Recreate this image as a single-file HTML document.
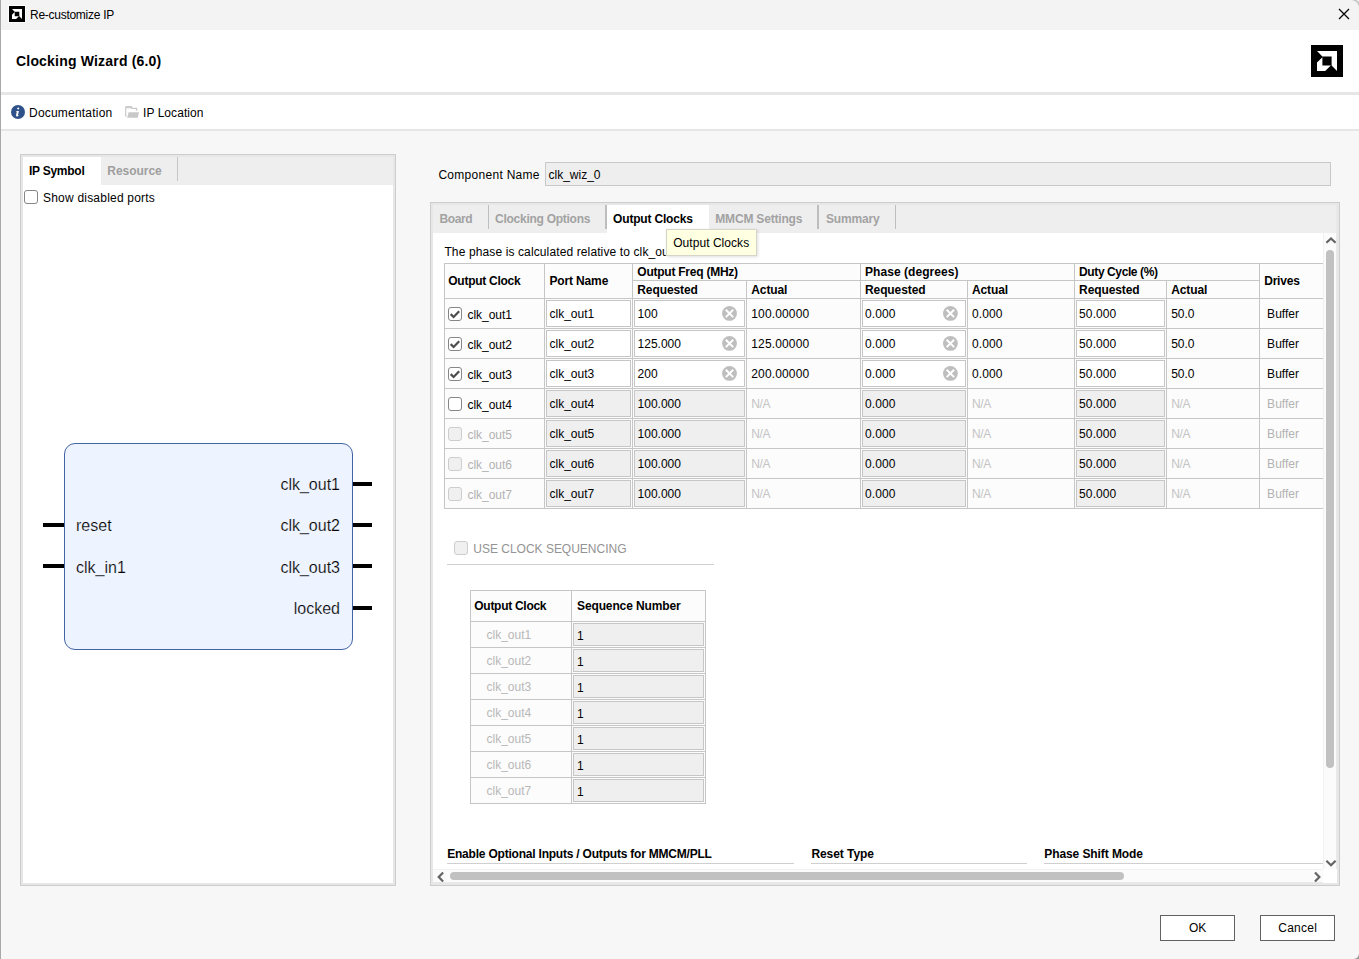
<!DOCTYPE html>
<html><head><meta charset="utf-8"><title>Re-customize IP</title>
<style>
*{box-sizing:border-box;margin:0;padding:0}
html,body{width:1359px;height:959px;overflow:hidden}
body{background:#f7f7f7;font-family:"Liberation Sans",sans-serif;font-size:12px;color:#000;position:relative}
.abs{position:absolute}
.t{position:absolute;white-space:pre}
.cb{position:absolute;width:14px;height:14px;border:1px solid #868686;border-radius:3px;background:#fff}
.cb.dis{border-color:#cdcdcd;background:#f0f0f0}
.inp{position:absolute;border:1px solid #c6c6c6;background:#fff}
.inp.dis{background:#efefef}
</style></head><body>
<div class="abs" style="left:0;top:0;width:1359px;height:30px;background:#f3f3f3"></div>
<div class="abs" style="left:0;top:30px;width:1359px;height:62px;background:#fff"></div>
<div class="abs" style="left:0;top:92px;width:1359px;height:3px;background:#e6e6e6"></div>
<div class="abs" style="left:0;top:95px;width:1359px;height:34px;background:#fff"></div>
<div class="abs" style="left:0;top:129px;width:1359px;height:2px;background:#e6e6e6"></div>
<div class="abs" style="left:0;top:0;width:1px;height:959px;background:#a8a8a8"></div>
<div class="abs" style="left:8px;top:5px;width:18px;height:18px;background:#fff"></div>
<svg class="abs" style="left:9px;top:6px" width="16" height="16" viewBox="0 0 32 32"><rect width="32" height="32" fill="#000"/><path d="M6 6H26V26L20.6 20.6V11.4H11.4Z" fill="#fff"/><path d="M11.4 12.2V20.6H19.8L14.2 26H6V17.6Z" fill="#fff"/></svg>
<svg class="abs" style="left:1311px;top:45px" width="32" height="32" viewBox="0 0 32 32"><rect width="32" height="32" fill="#000"/><path d="M6 6H26V26L20.6 20.6V11.4H11.4Z" fill="#fff"/><path d="M11.4 12.2V20.6H19.8L14.2 26H6V17.6Z" fill="#fff"/></svg>
<span class="t" style="top:8px;font-size:12px;line-height:14px;letter-spacing:-0.27px;left:30px;">Re-customize IP</span>
<svg class="abs" style="left:1338px;top:8px" width="12" height="12" viewBox="0 0 12 12"><path d="M1 1L11 11M11 1L1 11" stroke="#000" stroke-width="1.200" fill="none"/></svg>
<span class="t" style="top:53px;font-size:14px;line-height:16px;letter-spacing:0.19px;left:16px;font-weight:bold;">Clocking Wizard (6.0)</span>
<svg class="abs" style="left:1347px;top:0" width="12" height="12" viewBox="0 0 12 12"><path d="M4 -1Q12 0 13 8" fill="none" stroke="#c4c4c4" stroke-width="1.600"/></svg>
<svg class="abs" style="left:1349px;top:949px" width="10" height="10" viewBox="0 0 10 10"><path d="M10 4.500Q9.500 9.500 4.500 10L10 10Z" fill="#9a9a9a"/></svg>
<svg class="abs" style="left:11px;top:105px" width="14" height="14" viewBox="0 0 14 14"><circle cx="7" cy="7" r="7" fill="#2f5189"/><path d="M7.2 2.6a1 1 0 1 1 0 2a1 1 0 0 1 0-2ZM5.2 6h2.7l-.9 3.9c-.1.5.2.6.7.4l.1.4c-.7.5-1.3.7-1.9.7c-.8 0-1-.5-.8-1.300l.6-3.100c.1-.5-.1-.6-.6-.6Z" fill="#fff"/></svg>
<span class="t" style="top:106px;font-size:12px;line-height:14px;letter-spacing:0.21px;left:29px;">Documentation</span>
<svg class="abs" style="left:125px;top:105px" width="15" height="14" viewBox="0 0 15 14"><path d="M0.700 11.800V2.400Q0.700 1.700 1.400 1.700H6.100Q6.700 1.700 6.700 2.400V3.300H11.600V5.800" fill="none" stroke="#c9c9c9" stroke-width="1.200"/><path d="M0.700 1.400H6.500V3.300H0.700Z" fill="#cdcdcd"/><path d="M3.600 7.300H14L12.800 12.800H2.100Z" fill="#c9c9c9"/></svg>
<span class="t" style="top:106px;font-size:12px;line-height:14px;letter-spacing:0.06px;left:143px;">IP Location</span>
<div class="abs" style="left:20px;top:154px;width:376px;height:732px;background:#e7e7e7;border:1px solid #cdcdcd"></div>
<div class="abs" style="left:23px;top:157px;width:370px;height:726px;background:#fff"></div>
<div class="abs" style="left:101px;top:157px;width:292px;height:28px;background:#eeeeee"></div>
<div class="abs" style="left:177px;top:157px;width:1px;height:24px;background:#c6c6c6"></div>
<span class="t" style="top:164px;font-size:12px;line-height:14px;letter-spacing:-0.26px;left:29px;font-weight:bold;">IP Symbol</span>
<span class="t" style="top:164px;font-size:12px;line-height:14px;letter-spacing:-0.04px;left:107.3px;font-weight:bold;color:#9e9e9e;">Resource</span>
<div class="cb" style="left:24px;top:190px"></div>
<span class="t" style="top:191px;font-size:12px;line-height:14px;letter-spacing:0.21px;left:43px;">Show disabled ports</span>
<div class="abs" style="left:64px;top:443px;width:289px;height:207px;background:#eef4ff;border:1px solid #4364a4;border-radius:11px"></div>
<div class="abs" style="left:43px;top:523px;width:21px;height:4px;background:#000"></div>
<div class="abs" style="left:43px;top:564px;width:21px;height:4px;background:#000"></div>
<div class="abs" style="left:353px;top:482px;width:19px;height:4px;background:#000"></div>
<div class="abs" style="left:353px;top:523px;width:19px;height:4px;background:#000"></div>
<div class="abs" style="left:353px;top:564px;width:19px;height:4px;background:#000"></div>
<div class="abs" style="left:353px;top:606px;width:19px;height:4px;background:#000"></div>
<span class="t" style="top:517px;font-size:16px;line-height:17px;left:76px;-webkit-text-stroke:0.2px #eef4ff;">reset</span>
<span class="t" style="top:559px;font-size:16px;line-height:17px;left:76px;-webkit-text-stroke:0.2px #eef4ff;">clk_in1</span>
<span class="t" style="top:476px;font-size:16px;line-height:17px;left:280.41px;-webkit-text-stroke:0.2px #eef4ff;">clk_out1</span>
<span class="t" style="top:517px;font-size:16px;line-height:17px;left:280.41px;-webkit-text-stroke:0.2px #eef4ff;">clk_out2</span>
<span class="t" style="top:559px;font-size:16px;line-height:17px;left:280.41px;-webkit-text-stroke:0.2px #eef4ff;">clk_out3</span>
<span class="t" style="top:600px;font-size:16px;line-height:17px;left:293.75px;-webkit-text-stroke:0.2px #eef4ff;">locked</span>
<span class="t" style="top:168px;font-size:12px;line-height:14px;letter-spacing:0.29px;left:438.4px;">Component Name</span>
<div class="abs" style="left:545px;top:162px;width:786px;height:24px;background:#eeeeee;border:1px solid #c8c8c8"></div>
<span class="t" style="top:168px;font-size:12px;line-height:14px;letter-spacing:-0px;left:548.5px;">clk_wiz_0</span>
<div class="abs" style="left:430px;top:202px;width:910px;height:684px;background:#e7e7e7;border:1px solid #cdcdcd"></div>
<div class="abs" style="left:433px;top:205px;width:904px;height:678px;background:#fff"></div>
<div class="abs" style="left:433px;top:205px;width:904px;height:28px;background:#eeeeee"></div>
<div class="abs" style="left:607px;top:205px;width:102px;height:28px;background:#fff"></div>
<div class="abs" style="left:488px;top:205px;width:1px;height:24px;background:#bebebe"></div>
<div class="abs" style="left:605px;top:205px;width:2px;height:24px;background:#bebebe"></div>
<div class="abs" style="left:817px;top:205px;width:2px;height:24px;background:#bebebe"></div>
<div class="abs" style="left:895px;top:205px;width:1px;height:24px;background:#bebebe"></div>
<span class="t" style="top:212px;font-size:12px;line-height:14px;letter-spacing:-0.39px;left:439.5px;font-weight:bold;color:#a2a2a2;">Board</span>
<span class="t" style="top:212px;font-size:12px;line-height:14px;letter-spacing:-0.27px;left:495.1px;font-weight:bold;color:#a2a2a2;">Clocking Options</span>
<span class="t" style="top:212px;font-size:12px;line-height:14px;letter-spacing:-0.19px;left:613.1px;font-weight:bold;">Output Clocks</span>
<span class="t" style="top:212px;font-size:12px;line-height:14px;letter-spacing:-0.19px;left:715.3px;font-weight:bold;color:#a2a2a2;">MMCM Settings</span>
<span class="t" style="top:212px;font-size:12px;line-height:14px;letter-spacing:-0.16px;left:826px;font-weight:bold;color:#a2a2a2;">Summary</span>
<div class="abs" style="left:1323px;top:233px;width:14px;height:637px;background:#fbfbfb;border-left:1px solid #f1f1f1"></div>
<div class="abs" style="left:433px;top:869px;width:890px;height:14px;background:#fbfbfb;border-top:1px solid #f1f1f1"></div>
<div class="abs" style="left:1326px;top:250px;width:8px;height:518px;background:#c1c1c1;border-radius:4px"></div>
<div class="abs" style="left:450px;top:872px;width:674px;height:8px;background:#c1c1c1;border-radius:4px"></div>
<div class="abs" style="left:1336px;top:205px;width:1px;height:664px;background:#e9e9e9"></div>
<div class="abs" style="left:433px;top:882px;width:890px;height:1px;background:#e9e9e9"></div>
<svg class="abs" style="left:1323px;top:232px" width="17" height="17" viewBox="0 0 17 17"><polyline transform="translate(8.00 8.60)" points="-4.600,2.200 0,-2.200 4.600,2.200" fill="none" stroke="#646464" stroke-width="2.200"/></svg>
<svg class="abs" style="left:1323px;top:855px" width="17" height="17" viewBox="0 0 17 17"><polyline transform="translate(8.00 8.00)" points="-4.600,-2.200 0,2.200 4.600,-2.200" fill="none" stroke="#646464" stroke-width="2.200"/></svg>
<svg class="abs" style="left:432px;top:869px" width="17" height="17" viewBox="0 0 17 17"><polyline transform="translate(8.90 8.00)" points="2.200,-4.600 -2.200,0 2.200,4.600" fill="none" stroke="#646464" stroke-width="2.200"/></svg>
<svg class="abs" style="left:1309px;top:869px" width="17" height="17" viewBox="0 0 17 17"><polyline transform="translate(8.20 8.00)" points="-2.200,-4.600 2.200,0 -2.200,4.600" fill="none" stroke="#646464" stroke-width="2.200"/></svg>
<span class="t" style="top:245px;font-size:12px;line-height:14px;letter-spacing:0.12px;left:444.4px;">The phase is calculated relative to clk_out1.</span>
<div class="abs" style="left:444px;top:263px;width:879px;height:246px;background:#fcfcfc"></div>
<div class="abs" style="left:444px;top:263px;width:879px;height:1px;background:#c6c6c6"></div>
<div class="abs" style="left:632px;top:280px;width:627px;height:1px;background:#c6c6c6"></div>
<div class="abs" style="left:444px;top:298px;width:879px;height:1px;background:#c6c6c6"></div>
<div class="abs" style="left:444px;top:328px;width:879px;height:1px;background:#c6c6c6"></div>
<div class="abs" style="left:444px;top:358px;width:879px;height:1px;background:#c6c6c6"></div>
<div class="abs" style="left:444px;top:388px;width:879px;height:1px;background:#c6c6c6"></div>
<div class="abs" style="left:444px;top:418px;width:879px;height:1px;background:#c6c6c6"></div>
<div class="abs" style="left:444px;top:448px;width:879px;height:1px;background:#c6c6c6"></div>
<div class="abs" style="left:444px;top:478px;width:879px;height:1px;background:#c6c6c6"></div>
<div class="abs" style="left:444px;top:508px;width:879px;height:1px;background:#c6c6c6"></div>
<div class="abs" style="left:444px;top:263px;width:1px;height:246px;background:#c6c6c6"></div>
<div class="abs" style="left:544px;top:263px;width:1px;height:246px;background:#c6c6c6"></div>
<div class="abs" style="left:632px;top:263px;width:1px;height:246px;background:#c6c6c6"></div>
<div class="abs" style="left:746px;top:280px;width:1px;height:229px;background:#c6c6c6"></div>
<div class="abs" style="left:860px;top:263px;width:1px;height:246px;background:#c6c6c6"></div>
<div class="abs" style="left:967px;top:280px;width:1px;height:229px;background:#c6c6c6"></div>
<div class="abs" style="left:1074px;top:263px;width:1px;height:246px;background:#c6c6c6"></div>
<div class="abs" style="left:1166px;top:280px;width:1px;height:229px;background:#c6c6c6"></div>
<div class="abs" style="left:1259px;top:263px;width:1px;height:246px;background:#c6c6c6"></div>
<span class="t" style="top:274px;font-size:12px;line-height:14px;letter-spacing:-0.27px;left:448.3px;font-weight:bold;">Output Clock</span>
<span class="t" style="top:274px;font-size:12px;line-height:14px;letter-spacing:-0.15px;left:549.5px;font-weight:bold;">Port Name</span>
<span class="t" style="top:265px;font-size:12px;line-height:14px;letter-spacing:-0.24px;left:637.3px;font-weight:bold;">Output Freq (MHz)</span>
<span class="t" style="top:283px;font-size:12px;line-height:14px;letter-spacing:-0.1px;left:637.3px;font-weight:bold;">Requested</span>
<span class="t" style="top:283px;font-size:12px;line-height:14px;letter-spacing:-0.11px;left:751.3px;font-weight:bold;">Actual</span>
<span class="t" style="top:265px;font-size:12px;line-height:14px;letter-spacing:0.05px;left:865px;font-weight:bold;">Phase (degrees)</span>
<span class="t" style="top:283px;font-size:12px;line-height:14px;letter-spacing:-0.1px;left:865px;font-weight:bold;">Requested</span>
<span class="t" style="top:283px;font-size:12px;line-height:14px;letter-spacing:-0.11px;left:972px;font-weight:bold;">Actual</span>
<span class="t" style="top:265px;font-size:12px;line-height:14px;letter-spacing:-0.4px;left:1079.1px;font-weight:bold;">Duty Cycle (%)</span>
<span class="t" style="top:283px;font-size:12px;line-height:14px;letter-spacing:-0.1px;left:1079.1px;font-weight:bold;">Requested</span>
<span class="t" style="top:283px;font-size:12px;line-height:14px;letter-spacing:-0.11px;left:1171.2px;font-weight:bold;">Actual</span>
<span class="t" style="top:274px;font-size:12px;line-height:14px;letter-spacing:-0.2px;left:1264.2px;font-weight:bold;">Drives</span>
<div class="cb" style="left:448px;top:307px"></div>
<svg class="abs" style="left:448px;top:307px" width="14" height="14" viewBox="0 0 14 14"><path d="M2.700 7.100L5.600 10L11.200 4.200" fill="none" stroke="#4d4d4d" stroke-width="2.200"/></svg>
<span class="t" style="top:308px;font-size:12px;line-height:14px;letter-spacing:-0.01px;left:467.4px;">clk_out1</span>
<div class="inp" style="left:546px;top:300px;width:85px;height:27px"></div>
<div class="inp" style="left:634px;top:300px;width:111px;height:27px"></div>
<div class="inp" style="left:862px;top:300px;width:104px;height:27px"></div>
<div class="inp" style="left:1076px;top:300px;width:89px;height:27px"></div>
<span class="t" style="top:307px;font-size:12px;line-height:14px;letter-spacing:-0.01px;left:549.5px;">clk_out1</span>
<span class="t" style="top:307px;font-size:12px;line-height:14px;left:637.6px;">100</span>
<span class="t" style="top:307px;font-size:12px;line-height:14px;letter-spacing:0.09px;left:865px;">0.000</span>
<span class="t" style="top:307px;font-size:12px;line-height:14px;letter-spacing:0.1px;left:1079.1px;">50.000</span>
<svg class="abs" style="left:721px;top:305px" width="17" height="17" viewBox="0 0 17 17"><g transform="translate(8.50 8.40)"><circle r="7.400" fill="#bebebe"/><path d="M-3.700 -3.700L3.700 3.700M3.700 -3.700L-3.700 3.700" stroke="#fff" stroke-width="2" fill="none"/></g></svg>
<svg class="abs" style="left:942px;top:305px" width="17" height="17" viewBox="0 0 17 17"><g transform="translate(8.40 8.40)"><circle r="7.400" fill="#bebebe"/><path d="M-3.700 -3.700L3.700 3.700M3.700 -3.700L-3.700 3.700" stroke="#fff" stroke-width="2" fill="none"/></g></svg>
<span class="t" style="top:307px;font-size:12px;line-height:14px;letter-spacing:0.14px;left:751.3px;">100.00000</span>
<span class="t" style="top:307px;font-size:12px;line-height:14px;letter-spacing:0.09px;left:972px;">0.000</span>
<span class="t" style="top:307px;font-size:12px;line-height:14px;letter-spacing:-0.04px;left:1171.2px;">50.0</span>
<span class="t" style="top:307px;font-size:12px;line-height:14px;letter-spacing:0.03px;left:1267.1px;">Buffer</span>
<div class="cb" style="left:448px;top:337px"></div>
<svg class="abs" style="left:448px;top:337px" width="14" height="14" viewBox="0 0 14 14"><path d="M2.700 7.100L5.600 10L11.200 4.200" fill="none" stroke="#4d4d4d" stroke-width="2.200"/></svg>
<span class="t" style="top:338px;font-size:12px;line-height:14px;letter-spacing:-0.01px;left:467.4px;">clk_out2</span>
<div class="inp" style="left:546px;top:330px;width:85px;height:27px"></div>
<div class="inp" style="left:634px;top:330px;width:111px;height:27px"></div>
<div class="inp" style="left:862px;top:330px;width:104px;height:27px"></div>
<div class="inp" style="left:1076px;top:330px;width:89px;height:27px"></div>
<span class="t" style="top:337px;font-size:12px;line-height:14px;letter-spacing:-0.01px;left:549.5px;">clk_out2</span>
<span class="t" style="top:337px;font-size:12px;line-height:14px;left:637.6px;">125.000</span>
<span class="t" style="top:337px;font-size:12px;line-height:14px;letter-spacing:0.09px;left:865px;">0.000</span>
<span class="t" style="top:337px;font-size:12px;line-height:14px;letter-spacing:0.1px;left:1079.1px;">50.000</span>
<svg class="abs" style="left:721px;top:335px" width="17" height="17" viewBox="0 0 17 17"><g transform="translate(8.50 8.40)"><circle r="7.400" fill="#bebebe"/><path d="M-3.700 -3.700L3.700 3.700M3.700 -3.700L-3.700 3.700" stroke="#fff" stroke-width="2" fill="none"/></g></svg>
<svg class="abs" style="left:942px;top:335px" width="17" height="17" viewBox="0 0 17 17"><g transform="translate(8.40 8.40)"><circle r="7.400" fill="#bebebe"/><path d="M-3.700 -3.700L3.700 3.700M3.700 -3.700L-3.700 3.700" stroke="#fff" stroke-width="2" fill="none"/></g></svg>
<span class="t" style="top:337px;font-size:12px;line-height:14px;letter-spacing:0.14px;left:751.3px;">125.00000</span>
<span class="t" style="top:337px;font-size:12px;line-height:14px;letter-spacing:0.09px;left:972px;">0.000</span>
<span class="t" style="top:337px;font-size:12px;line-height:14px;letter-spacing:-0.04px;left:1171.2px;">50.0</span>
<span class="t" style="top:337px;font-size:12px;line-height:14px;letter-spacing:0.03px;left:1267.1px;">Buffer</span>
<div class="cb" style="left:448px;top:367px"></div>
<svg class="abs" style="left:448px;top:367px" width="14" height="14" viewBox="0 0 14 14"><path d="M2.700 7.100L5.600 10L11.200 4.200" fill="none" stroke="#4d4d4d" stroke-width="2.200"/></svg>
<span class="t" style="top:368px;font-size:12px;line-height:14px;letter-spacing:-0.01px;left:467.4px;">clk_out3</span>
<div class="inp" style="left:546px;top:360px;width:85px;height:27px"></div>
<div class="inp" style="left:634px;top:360px;width:111px;height:27px"></div>
<div class="inp" style="left:862px;top:360px;width:104px;height:27px"></div>
<div class="inp" style="left:1076px;top:360px;width:89px;height:27px"></div>
<span class="t" style="top:367px;font-size:12px;line-height:14px;letter-spacing:-0.01px;left:549.5px;">clk_out3</span>
<span class="t" style="top:367px;font-size:12px;line-height:14px;left:637.6px;">200</span>
<span class="t" style="top:367px;font-size:12px;line-height:14px;letter-spacing:0.09px;left:865px;">0.000</span>
<span class="t" style="top:367px;font-size:12px;line-height:14px;letter-spacing:0.1px;left:1079.1px;">50.000</span>
<svg class="abs" style="left:721px;top:365px" width="17" height="17" viewBox="0 0 17 17"><g transform="translate(8.50 8.40)"><circle r="7.400" fill="#bebebe"/><path d="M-3.700 -3.700L3.700 3.700M3.700 -3.700L-3.700 3.700" stroke="#fff" stroke-width="2" fill="none"/></g></svg>
<svg class="abs" style="left:942px;top:365px" width="17" height="17" viewBox="0 0 17 17"><g transform="translate(8.40 8.40)"><circle r="7.400" fill="#bebebe"/><path d="M-3.700 -3.700L3.700 3.700M3.700 -3.700L-3.700 3.700" stroke="#fff" stroke-width="2" fill="none"/></g></svg>
<span class="t" style="top:367px;font-size:12px;line-height:14px;letter-spacing:0.14px;left:751.3px;">200.00000</span>
<span class="t" style="top:367px;font-size:12px;line-height:14px;letter-spacing:0.09px;left:972px;">0.000</span>
<span class="t" style="top:367px;font-size:12px;line-height:14px;letter-spacing:-0.04px;left:1171.2px;">50.0</span>
<span class="t" style="top:367px;font-size:12px;line-height:14px;letter-spacing:0.03px;left:1267.1px;">Buffer</span>
<div class="cb" style="left:448px;top:397px"></div>
<span class="t" style="top:398px;font-size:12px;line-height:14px;letter-spacing:-0.01px;left:467.4px;">clk_out4</span>
<div class="inp dis" style="left:546px;top:390px;width:85px;height:27px"></div>
<div class="inp dis" style="left:634px;top:390px;width:111px;height:27px"></div>
<div class="inp dis" style="left:862px;top:390px;width:104px;height:27px"></div>
<div class="inp dis" style="left:1076px;top:390px;width:89px;height:27px"></div>
<span class="t" style="top:397px;font-size:12px;line-height:14px;letter-spacing:-0.01px;left:549.5px;">clk_out4</span>
<span class="t" style="top:397px;font-size:12px;line-height:14px;left:637.6px;">100.000</span>
<span class="t" style="top:397px;font-size:12px;line-height:14px;letter-spacing:0.09px;left:865px;">0.000</span>
<span class="t" style="top:397px;font-size:12px;line-height:14px;letter-spacing:0.1px;left:1079.1px;">50.000</span>
<span class="t" style="top:397px;font-size:12px;line-height:14px;letter-spacing:-0.34px;left:751.3px;color:#c4c4c4;">N/A</span>
<span class="t" style="top:397px;font-size:12px;line-height:14px;letter-spacing:-0.34px;left:972px;color:#c4c4c4;">N/A</span>
<span class="t" style="top:397px;font-size:12px;line-height:14px;letter-spacing:-0.34px;left:1171.2px;color:#c4c4c4;">N/A</span>
<span class="t" style="top:397px;font-size:12px;line-height:14px;letter-spacing:0.03px;left:1267.1px;color:#b2b2b2;">Buffer</span>
<div class="cb dis" style="left:448px;top:427px"></div>
<span class="t" style="top:428px;font-size:12px;line-height:14px;letter-spacing:-0.01px;left:467.4px;color:#b2b2b2;">clk_out5</span>
<div class="inp dis" style="left:546px;top:420px;width:85px;height:27px"></div>
<div class="inp dis" style="left:634px;top:420px;width:111px;height:27px"></div>
<div class="inp dis" style="left:862px;top:420px;width:104px;height:27px"></div>
<div class="inp dis" style="left:1076px;top:420px;width:89px;height:27px"></div>
<span class="t" style="top:427px;font-size:12px;line-height:14px;letter-spacing:-0.01px;left:549.5px;">clk_out5</span>
<span class="t" style="top:427px;font-size:12px;line-height:14px;left:637.6px;">100.000</span>
<span class="t" style="top:427px;font-size:12px;line-height:14px;letter-spacing:0.09px;left:865px;">0.000</span>
<span class="t" style="top:427px;font-size:12px;line-height:14px;letter-spacing:0.1px;left:1079.1px;">50.000</span>
<span class="t" style="top:427px;font-size:12px;line-height:14px;letter-spacing:-0.34px;left:751.3px;color:#c4c4c4;">N/A</span>
<span class="t" style="top:427px;font-size:12px;line-height:14px;letter-spacing:-0.34px;left:972px;color:#c4c4c4;">N/A</span>
<span class="t" style="top:427px;font-size:12px;line-height:14px;letter-spacing:-0.34px;left:1171.2px;color:#c4c4c4;">N/A</span>
<span class="t" style="top:427px;font-size:12px;line-height:14px;letter-spacing:0.03px;left:1267.1px;color:#b2b2b2;">Buffer</span>
<div class="cb dis" style="left:448px;top:457px"></div>
<span class="t" style="top:458px;font-size:12px;line-height:14px;letter-spacing:-0.01px;left:467.4px;color:#b2b2b2;">clk_out6</span>
<div class="inp dis" style="left:546px;top:450px;width:85px;height:27px"></div>
<div class="inp dis" style="left:634px;top:450px;width:111px;height:27px"></div>
<div class="inp dis" style="left:862px;top:450px;width:104px;height:27px"></div>
<div class="inp dis" style="left:1076px;top:450px;width:89px;height:27px"></div>
<span class="t" style="top:457px;font-size:12px;line-height:14px;letter-spacing:-0.01px;left:549.5px;">clk_out6</span>
<span class="t" style="top:457px;font-size:12px;line-height:14px;left:637.6px;">100.000</span>
<span class="t" style="top:457px;font-size:12px;line-height:14px;letter-spacing:0.09px;left:865px;">0.000</span>
<span class="t" style="top:457px;font-size:12px;line-height:14px;letter-spacing:0.1px;left:1079.1px;">50.000</span>
<span class="t" style="top:457px;font-size:12px;line-height:14px;letter-spacing:-0.34px;left:751.3px;color:#c4c4c4;">N/A</span>
<span class="t" style="top:457px;font-size:12px;line-height:14px;letter-spacing:-0.34px;left:972px;color:#c4c4c4;">N/A</span>
<span class="t" style="top:457px;font-size:12px;line-height:14px;letter-spacing:-0.34px;left:1171.2px;color:#c4c4c4;">N/A</span>
<span class="t" style="top:457px;font-size:12px;line-height:14px;letter-spacing:0.03px;left:1267.1px;color:#b2b2b2;">Buffer</span>
<div class="cb dis" style="left:448px;top:487px"></div>
<span class="t" style="top:488px;font-size:12px;line-height:14px;letter-spacing:-0.01px;left:467.4px;color:#b2b2b2;">clk_out7</span>
<div class="inp dis" style="left:546px;top:480px;width:85px;height:27px"></div>
<div class="inp dis" style="left:634px;top:480px;width:111px;height:27px"></div>
<div class="inp dis" style="left:862px;top:480px;width:104px;height:27px"></div>
<div class="inp dis" style="left:1076px;top:480px;width:89px;height:27px"></div>
<span class="t" style="top:487px;font-size:12px;line-height:14px;letter-spacing:-0.01px;left:549.5px;">clk_out7</span>
<span class="t" style="top:487px;font-size:12px;line-height:14px;left:637.6px;">100.000</span>
<span class="t" style="top:487px;font-size:12px;line-height:14px;letter-spacing:0.09px;left:865px;">0.000</span>
<span class="t" style="top:487px;font-size:12px;line-height:14px;letter-spacing:0.1px;left:1079.1px;">50.000</span>
<span class="t" style="top:487px;font-size:12px;line-height:14px;letter-spacing:-0.34px;left:751.3px;color:#c4c4c4;">N/A</span>
<span class="t" style="top:487px;font-size:12px;line-height:14px;letter-spacing:-0.34px;left:972px;color:#c4c4c4;">N/A</span>
<span class="t" style="top:487px;font-size:12px;line-height:14px;letter-spacing:-0.34px;left:1171.2px;color:#c4c4c4;">N/A</span>
<span class="t" style="top:487px;font-size:12px;line-height:14px;letter-spacing:0.03px;left:1267.1px;color:#b2b2b2;">Buffer</span>
<div class="cb dis" style="left:454px;top:541px"></div>
<span class="t" style="top:542px;font-size:12px;line-height:14px;letter-spacing:-0.01px;left:473.3px;color:#939393;">USE CLOCK SEQUENCING</span>
<div class="abs" style="left:447px;top:564px;width:267px;height:1px;background:#cfcfcf"></div>
<div class="abs" style="left:470px;top:590px;width:236px;height:214px;background:#fcfcfc"></div>
<div class="abs" style="left:470px;top:590px;width:236px;height:1px;background:#c6c6c6"></div>
<div class="abs" style="left:470px;top:621px;width:236px;height:1px;background:#c6c6c6"></div>
<div class="abs" style="left:470px;top:647px;width:236px;height:1px;background:#c6c6c6"></div>
<div class="abs" style="left:470px;top:673px;width:236px;height:1px;background:#c6c6c6"></div>
<div class="abs" style="left:470px;top:699px;width:236px;height:1px;background:#c6c6c6"></div>
<div class="abs" style="left:470px;top:725px;width:236px;height:1px;background:#c6c6c6"></div>
<div class="abs" style="left:470px;top:751px;width:236px;height:1px;background:#c6c6c6"></div>
<div class="abs" style="left:470px;top:777px;width:236px;height:1px;background:#c6c6c6"></div>
<div class="abs" style="left:470px;top:803px;width:236px;height:1px;background:#c6c6c6"></div>
<div class="abs" style="left:470px;top:590px;width:1px;height:214px;background:#c6c6c6"></div>
<div class="abs" style="left:571px;top:590px;width:1px;height:214px;background:#c6c6c6"></div>
<div class="abs" style="left:705px;top:590px;width:1px;height:214px;background:#c6c6c6"></div>
<span class="t" style="top:599px;font-size:12px;line-height:14px;letter-spacing:-0.28px;left:474.3px;font-weight:bold;">Output Clock</span>
<span class="t" style="top:599px;font-size:12px;line-height:14px;letter-spacing:-0.12px;left:577px;font-weight:bold;">Sequence Number</span>
<span class="t" style="top:628px;font-size:12px;line-height:14px;letter-spacing:-0px;left:486.5px;color:#b8b8b8;">clk_out1</span>
<div class="inp dis" style="left:573px;top:623px;width:131px;height:23px"></div>
<span class="t" style="top:628.5px;font-size:12px;line-height:14px;left:577px;">1</span>
<span class="t" style="top:654px;font-size:12px;line-height:14px;letter-spacing:-0px;left:486.5px;color:#b8b8b8;">clk_out2</span>
<div class="inp dis" style="left:573px;top:649px;width:131px;height:23px"></div>
<span class="t" style="top:654.5px;font-size:12px;line-height:14px;left:577px;">1</span>
<span class="t" style="top:680px;font-size:12px;line-height:14px;letter-spacing:-0px;left:486.5px;color:#b8b8b8;">clk_out3</span>
<div class="inp dis" style="left:573px;top:675px;width:131px;height:23px"></div>
<span class="t" style="top:680.5px;font-size:12px;line-height:14px;left:577px;">1</span>
<span class="t" style="top:706px;font-size:12px;line-height:14px;letter-spacing:-0px;left:486.5px;color:#b8b8b8;">clk_out4</span>
<div class="inp dis" style="left:573px;top:701px;width:131px;height:23px"></div>
<span class="t" style="top:706.5px;font-size:12px;line-height:14px;left:577px;">1</span>
<span class="t" style="top:732px;font-size:12px;line-height:14px;letter-spacing:-0px;left:486.5px;color:#b8b8b8;">clk_out5</span>
<div class="inp dis" style="left:573px;top:727px;width:131px;height:23px"></div>
<span class="t" style="top:732.5px;font-size:12px;line-height:14px;left:577px;">1</span>
<span class="t" style="top:758px;font-size:12px;line-height:14px;letter-spacing:-0px;left:486.5px;color:#b8b8b8;">clk_out6</span>
<div class="inp dis" style="left:573px;top:753px;width:131px;height:23px"></div>
<span class="t" style="top:758.5px;font-size:12px;line-height:14px;left:577px;">1</span>
<span class="t" style="top:784px;font-size:12px;line-height:14px;letter-spacing:-0px;left:486.5px;color:#b8b8b8;">clk_out7</span>
<div class="inp dis" style="left:573px;top:779px;width:131px;height:23px"></div>
<span class="t" style="top:784.5px;font-size:12px;line-height:14px;left:577px;">1</span>
<span class="t" style="top:847px;font-size:12px;line-height:14px;letter-spacing:-0.21px;left:447.2px;font-weight:bold;">Enable Optional Inputs / Outputs for MMCM/PLL</span>
<div class="abs" style="left:447px;top:863px;width:347px;height:1px;background:#cfcfcf"></div>
<span class="t" style="top:847px;font-size:12px;line-height:14px;letter-spacing:-0.06px;left:811.4px;font-weight:bold;">Reset Type</span>
<div class="abs" style="left:811px;top:863px;width:216px;height:1px;background:#cfcfcf"></div>
<span class="t" style="top:847px;font-size:12px;line-height:14px;letter-spacing:-0.09px;left:1044.3px;font-weight:bold;">Phase Shift Mode</span>
<div class="abs" style="left:1044px;top:863px;width:279px;height:1px;background:#cfcfcf"></div>
<div class="abs" style="left:1323px;top:869px;width:14px;height:14px;background:#fff"></div>
<div class="abs" style="left:666px;top:229px;width:91px;height:27px;background:#ffffe1;border:1px solid #d6d6c8;box-shadow:1px 1px 3px rgba(0,0,0,.13)"></div>
<span class="t" style="top:236px;font-size:12px;line-height:14px;letter-spacing:0.05px;left:673.2px;">Output Clocks</span>
<div class="abs" style="left:1160px;top:915px;width:75px;height:26px;background:#fff;border:1px solid #626262"></div>
<div class="abs" style="left:1260px;top:915px;width:75px;height:26px;background:#fff;border:1px solid #626262"></div>
<span class="t" style="top:921px;font-size:12px;line-height:14px;letter-spacing:-0.22px;left:1189.1px;">OK</span>
<span class="t" style="top:921px;font-size:12px;line-height:14px;letter-spacing:0.24px;left:1278.3px;">Cancel</span>
</body></html>
